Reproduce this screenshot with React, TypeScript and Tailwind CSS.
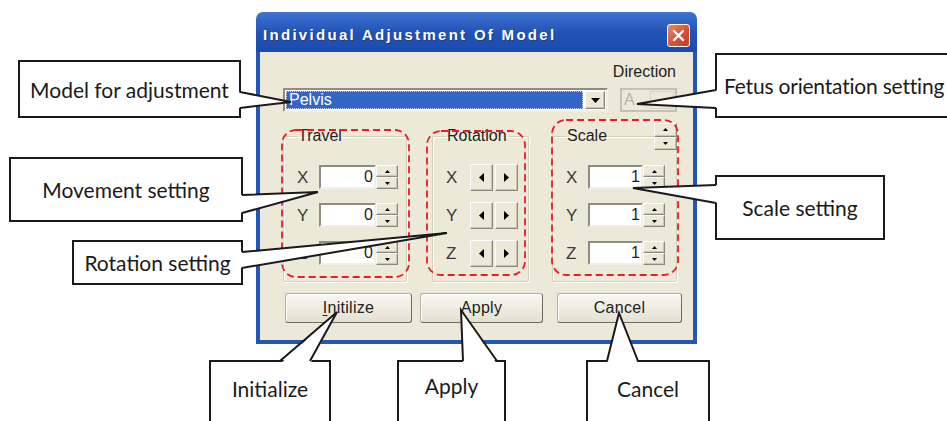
import React from 'react';

type Pt = [number, number];

const callouts = [
  { text: 'Model for adjustment', cls: 'left-[18px] top-[60px] w-[223px] h-[58px]' },
  { text: 'Movement setting', cls: 'left-[9px] top-[157px] w-[234px] h-[65px]' },
  { text: 'Rotation setting', cls: 'left-[72px] top-[240px] w-[171px] h-[45px]' },
  { text: 'Fetus orientation setting', cls: 'left-[715px] top-[53px] w-[250px] h-[65px] justify-start pl-[7px] text-[20px] tracking-[-0.2px]' },
  { text: 'Scale setting', cls: 'left-[715px] top-[175px] w-[170px] h-[65px]' },
  { text: 'Initialize', cls: 'left-[209px] top-[360px] w-[122px] h-[70px] items-start pt-[16px]' },
  { text: 'Apply', cls: 'left-[397px] top-[360px] w-[109px] h-[70px] items-start pt-[13px]' },
  { text: 'Cancel', cls: 'left-[586px] top-[360px] w-[124px] h-[70px] items-start pt-[16px]' },
];

// base1, tip, base2, and which way the box lies from the base
const tails: { pts: [Pt, Pt, Pt]; into: Pt }[] = [
  { pts: [[240, 92], [291, 102], [240, 108]], into: [-3, 0] },
  { pts: [[242, 195], [318, 192], [242, 213]], into: [-3, 0] },
  { pts: [[242, 252], [447, 233], [242, 268]], into: [-3, 0] },
  { pts: [[716, 90], [637, 104], [716, 108]], into: [3, 0] },
  { pts: [[716, 185], [633, 188], [716, 203]], into: [3, 0] },
  { pts: [[280, 361], [337, 312], [310, 361]], into: [0, 3] },
  { pts: [[463, 361], [461, 310], [497, 361]], into: [0, 3] },
  { pts: [[607, 361], [619, 313], [638, 361]], into: [0, 3] },
];

const dashed = [
  { x: 282, y: 130, w: 127, h: 147 },
  { x: 427, y: 131, w: 98, h: 144 },
  { x: 552, y: 120, w: 126, h: 155 },
];

function Arrow({ dir, small }: { dir: 'up' | 'down' | 'left' | 'right'; small?: boolean }) {
  if (dir === 'up' || dir === 'down') {
    const w = small ? 5 : 9;
    const h = small ? 3 : 5;
    const pts = dir === 'up' ? `0,${h} ${w / 2},0 ${w},${h}` : `0,0 ${w},0 ${w / 2},${h}`;
    return (
      <svg width={w} height={h} viewBox={`0 0 ${w} ${h}`}>
        <polygon points={pts} fill="#000" />
      </svg>
    );
  }
  const pts = dir === 'left' ? '5,0 5,9 0,4.5' : '0,0 0,9 5,4.5';
  return (
    <svg width={5} height={9} viewBox="0 0 5 9">
      <polygon points={pts} fill="#000" />
    </svg>
  );
}

const raised =
  'bg-[#ece9d8] border border-t-[#fdfdfb] border-l-[#fdfdfb] border-r-[#8a887c] border-b-[#8a887c] shadow-[inset_-1px_-1px_0_#c9c6b6]';

function SpinPair({ w = 'w-[22px]', h = 'h-[24px]' }: { w?: string; h?: string }) {
  return (
    <div className={`flex flex-col ${w} ${h} shrink-0`}>
      <div className={`flex-1 flex items-center justify-center ${raised}`}>
        <Arrow dir="up" small />
      </div>
      <div className={`flex-1 flex items-center justify-center ${raised}`}>
        <Arrow dir="down" small />
      </div>
    </div>
  );
}

function NumField({ value, w }: { value: string; w: string }) {
  return (
    <div className="flex items-center">
      <div
        className={`${w} h-[24px] bg-white border-2 border-t-[#8f8d82] border-l-[#8f8d82] border-b-[#f1efe6] border-r-[#f1efe6] flex items-center justify-end pr-[1px] text-[16px] leading-none text-[#222]`}
      >
        {value}
      </div>
      <SpinPair />
    </div>
  );
}

function Row({ label, labelW, children }: { label: string; labelW: string; children: React.ReactNode }) {
  return (
    <div className="flex items-center h-[28px]">
      <span className={`${labelW} text-[17px] text-[#3a3a3a] leading-none`}>{label}</span>
      {children}
    </div>
  );
}

function Group({ title, w, pad, children }: { title: string; w: string; pad: string; children: React.ReactNode }) {
  return (
    <fieldset className={`${w} h-[154px] border border-[#d0d0bf] shadow-[inset_1px_1px_0_#fff,1px_1px_0_#fff] rounded-[2px] ${pad}`}>
      <legend className="px-[1px] text-[16px] leading-[16px] text-[#222]">{title}</legend>
      <div className="flex flex-col gap-[10px] pt-[19px]">{children}</div>
    </fieldset>
  );
}

function Dialog() {
  return (
    <div className="ml-[256px] w-[441px] h-[332px] flex flex-col [font-family:'Liberation_Sans',Arial,sans-serif]">
      <div className="h-[40px] shrink-0 rounded-t-[7px] bg-gradient-to-b from-[#3f74d2] via-[#2353b6] to-[#1d4aad] flex items-center justify-between pl-[7px] pr-[7px] pt-[6px]">
        <span className="text-white font-bold text-[15px] tracking-[2.3px] [text-shadow:1px_1px_0_#1a3a80]">
          Individual Adjustment Of Model
        </span>
        <div className="w-[23px] h-[23px] rounded-[3px] border border-white bg-gradient-to-br from-[#e88a6c] via-[#d6553a] to-[#c04020] flex items-center justify-center">
          <svg width="13" height="13" viewBox="0 0 13 13">
            <path d="M2 2 L11 11 M11 2 L2 11" stroke="#fff" strokeWidth="2.4" strokeLinecap="round" />
          </svg>
        </div>
      </div>
      <div className="flex-1 bg-[#ece9d8] border-x-4 border-b-4 border-[#2256bb] pl-[23px] pr-[16px] pt-[11px]">
        <div className="h-[18px] flex justify-end items-center text-[16px] text-[#222] pr-[1px]">Direction</div>
        <div className="mt-[7px] h-[24px] flex">
          <div className="w-[325px] h-[24px] border-2 border-t-[#8f8d82] border-l-[#8f8d82] border-b-[#f1efe6] border-r-[#f1efe6] bg-white flex items-center p-[1px]">
            <div className="flex-1 h-full bg-[#3365c6] border border-dotted border-[#c9d6f0] flex items-center pl-[2px] text-white text-[16px] leading-none">
              Pelvis
            </div>
            <div className={`w-[20px] h-full ml-[2px] flex items-center justify-center ${raised}`}>
              <Arrow dir="down" />
            </div>
          </div>
          <div className="ml-[12px] w-[57px] h-[24px] border-2 border-[#c3c1b3] flex items-center">
            <span className="pl-[2px] text-[16px] text-[#b8b6a8] leading-none flex-1">A</span>
            <div className="w-[24px] h-[18px] mr-[1px] border border-[#d6d4c6]" />
          </div>
        </div>
        <div className="mt-[16px] flex">
          <Group title="Travel" w="w-[125px]" pad="pl-[13px]">
            <Row label="X" labelW="w-[22px]"><NumField value="0" w="w-[57px]" /></Row>
            <Row label="Y" labelW="w-[22px]"><NumField value="0" w="w-[57px]" /></Row>
            <Row label="Z" labelW="w-[22px]"><NumField value="0" w="w-[57px]" /></Row>
          </Group>
          <div className="ml-[25px]">
            <Group title="Rotation" w="w-[97px]" pad="pl-[13px]">
              {['X', 'Y', 'Z'].map((a) => (
                <Row key={a} label={a} labelW="w-[24px]">
                  <div className="flex gap-[2px]">
                    <div className={`w-[23px] h-[27px] flex items-center justify-center ${raised}`}>
                      <Arrow dir="left" />
                    </div>
                    <div className={`w-[23px] h-[27px] flex items-center justify-center ${raised}`}>
                      <Arrow dir="right" />
                    </div>
                  </div>
                </Row>
              ))}
            </Group>
          </div>
          <div className="ml-[23px] relative">
            <Group title="Scale" w="w-[125px]" pad="pl-[13px]">
              <Row label="X" labelW="w-[22px]"><NumField value="1" w="w-[55px]" /></Row>
              <Row label="Y" labelW="w-[22px]"><NumField value="1" w="w-[55px]" /></Row>
              <Row label="Z" labelW="w-[22px]"><NumField value="1" w="w-[55px]" /></Row>
            </Group>
            <div className="absolute right-0 top-[-5px]">
              <SpinPair w="w-[23px]" h="h-[27px]" />
            </div>
          </div>
        </div>
        <div className="mt-[11px] flex pl-[2px] text-[16px] text-[#222]">
          {[
            { label: 'Initilize', w: 'w-[127px]', ml: '' },
            { label: 'Apply', w: 'w-[123px]', ml: 'ml-[8px]' },
            { label: 'Cancel', w: 'w-[125px]', ml: 'ml-[14px]' },
          ].map((b) => (
            <div
              key={b.label}
              className={`${b.w} ${b.ml} shrink-0 h-[30px] rounded-[3px] bg-gradient-to-b from-[#f8f7f2] to-[#e4e1d3] border border-[#b4b2a4] border-r-[#6f6d62] border-b-[#6f6d62] shadow-[inset_1px_1px_0_#fff] flex items-center justify-center tracking-[0.3px]`}
            >
              {b.label === 'Initilize' ? (
                <span>
                  <span className="underline underline-offset-2">I</span>nitilize
                </span>
              ) : (
                b.label
              )}
            </div>
          ))}
        </div>
      </div>
    </div>
  );
}

function Overlay() {
  return (
    <svg className="absolute inset-0 pointer-events-none" width="947" height="421" viewBox="0 0 947 421">
      {dashed.map((d, i) => (
        <rect key={i} x={d.x} y={d.y} width={d.w} height={d.h} rx="14" fill="none" stroke="#ec1c24" strokeWidth="1.8" strokeDasharray="7 4" />
      ))}
      {tails.map((t, i) => {
        const [a, tip, b] = t.pts;
        const fill = [
          [a[0] + t.into[0], a[1] + t.into[1]],
          tip,
          [b[0] + t.into[0], b[1] + t.into[1]],
        ]
          .map((p) => p.join(','))
          .join(' ');
        return (
          <g key={i}>
            <polygon points={fill} fill="#fff" />
            <polyline points={[a, tip, b].map((p) => p.join(',')).join(' ')} fill="none" stroke="#1a1a1a" strokeWidth="2" strokeLinejoin="miter" />
          </g>
        );
      })}
    </svg>
  );
}

export default function App() {
  return (
    <div className="relative w-[947px] h-[421px] overflow-hidden bg-white pt-[12px]">
      <Dialog />
      {callouts.map((c) => (
        <div
          key={c.text}
          className={`absolute flex items-center justify-center bg-white border-2 border-[#1a1a1a] text-[21px] leading-none text-[#1a1a1a] [font-family:Lato,sans-serif] whitespace-nowrap ${c.cls}`}
        >
          {c.text}
        </div>
      ))}
      <Overlay />
    </div>
  );
}
